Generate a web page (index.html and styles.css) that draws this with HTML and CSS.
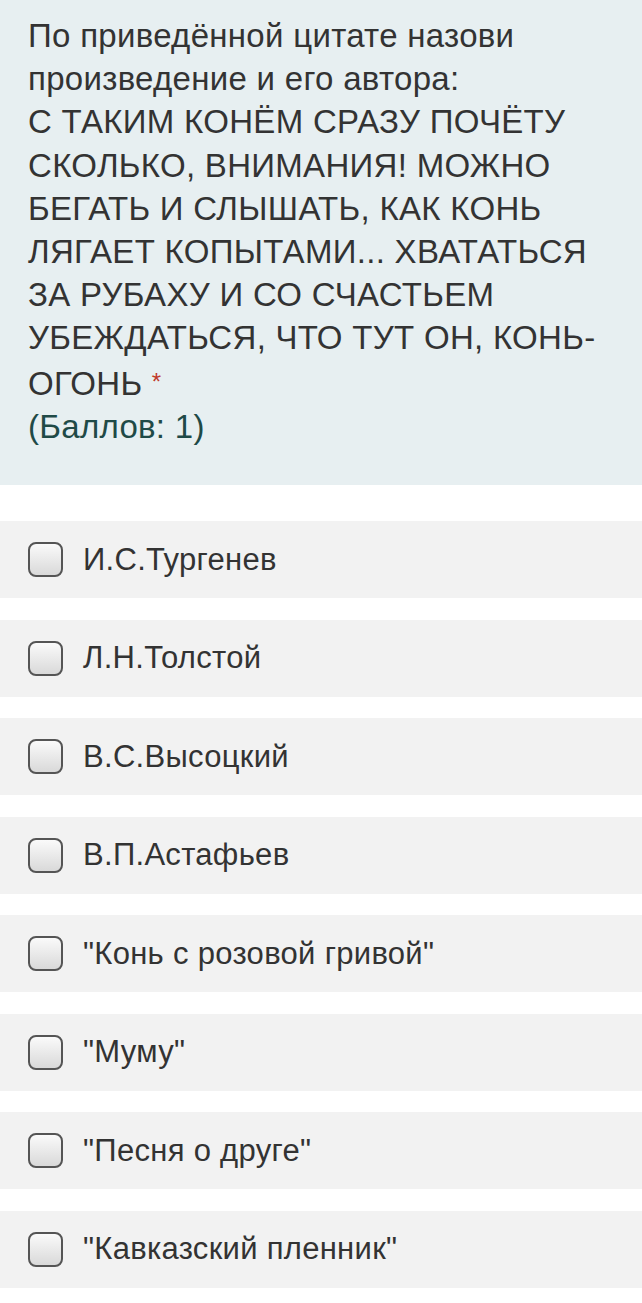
FILE: index.html
```html
<!DOCTYPE html>
<html lang="ru">
<head>
<meta charset="utf-8">
<link rel="stylesheet" href="styles.css">
</head>
<body>
<div class="question">
  <div class="q-text">По приведённой цитате назови<br>произведение и его автора:<br>С ТАКИМ КОНЁМ СРАЗУ ПОЧЁТУ<br>СКОЛЬКО, ВНИМАНИЯ! МОЖНО<br>БЕГАТЬ И СЛЫШАТЬ, КАК КОНЬ<br>ЛЯГАЕТ КОПЫТАМИ... ХВАТАТЬСЯ<br>ЗА РУБАХУ И СО СЧАСТЬЕМ<br>УБЕЖДАТЬСЯ, ЧТО ТУТ ОН, КОНЬ-<br>ОГОНЬ <span class="req">*</span></div>
  <div class="points">(Баллов: 1)</div>
</div>
<div class="options">
  <label class="option"><span class="box"></span><span class="label">И.С.Тургенев</span></label>
  <label class="option"><span class="box"></span><span class="label">Л.Н.Толстой</span></label>
  <label class="option"><span class="box"></span><span class="label">В.С.Высоцкий</span></label>
  <label class="option"><span class="box"></span><span class="label">В.П.Астафьев</span></label>
  <label class="option"><span class="box"></span><span class="label">"Конь с розовой гривой"</span></label>
  <label class="option"><span class="box"></span><span class="label">"Муму"</span></label>
  <label class="option"><span class="box"></span><span class="label">"Песня о друге"</span></label>
  <label class="option"><span class="box"></span><span class="label">"Кавказский пленник"</span></label>
</div>
</body>
</html>
```
FILE: styles.css
```css
* { box-sizing: border-box; }
html, body { margin: 0; padding: 0; background: #ffffff; }
body {
  font-family: "Liberation Sans", Arial, sans-serif;
  color: #333333;
  width: 642px;
}
.question {
  background: #e7eff1;
  padding: 14px 10px 38px 28px;
  height: 485px;
}
.q-text, .points {
  font-size: 33px;
  line-height: 43.2px;
  letter-spacing: 0.3px;
  white-space: nowrap;
}
.req { color: #c0392b; font-size: 24px; vertical-align: 5px; letter-spacing: 0; }
.points { color: #1f4a47; }
.options {
  display: flex;
  flex-direction: column;
  gap: 21.5px;
  padding-top: 36px;
}
.option {
  display: flex;
  align-items: center;
  height: 77px;
  background: #f2f2f2;
  padding-left: 28px;
  gap: 20px;
}
.box {
  width: 35px;
  height: 35px;
  border: 2px solid #555555;
  border-radius: 8px;
  background: linear-gradient(#fafafa, #d9d9d9);
  flex: none;
}
.label {
  font-size: 31px;
  letter-spacing: 0.3px;
}
```
